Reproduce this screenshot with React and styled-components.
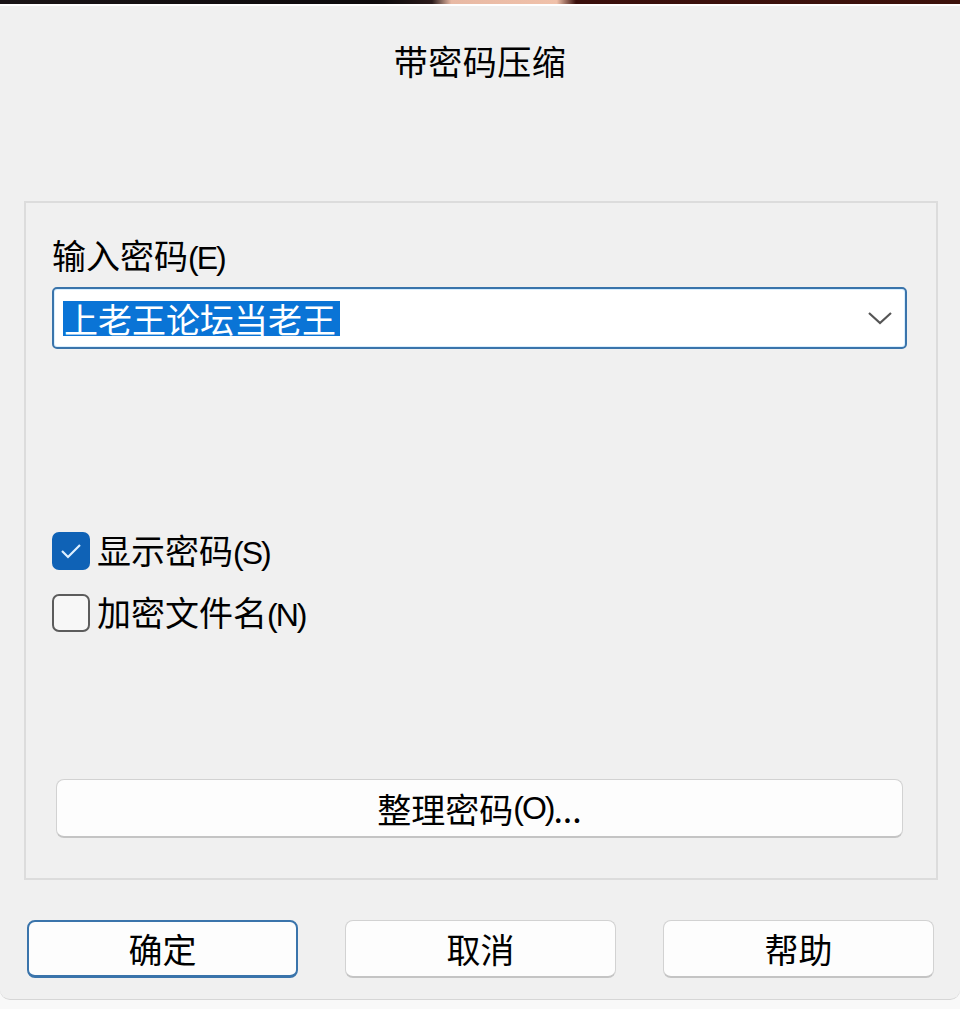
import React from "react";
import styled, { createGlobalStyle } from "styled-components";

const Global = createGlobalStyle`
  html, body { margin: 0; padding: 0; background: #f9f9f9; }
  body { font-family: "Noto Sans CJK SC", "Microsoft YaHei", "Noto Sans", sans-serif; color: #000; }
  * { box-sizing: border-box; }
`;

const Backdrop = styled.div`
  height: 4px;
  background: linear-gradient(90deg, #1a1416 0%, #0d0a0c 40%, #2a1a1a 45%, #e8b9a4 47%, #f0c1aa 58%, #3a0f0b 60%, #3d120c 100%);
`;

const Window = styled.div`
  height: 996px;
  background: #f0f0f0;
  border-top: 2px solid #ffffff;
  border-bottom: 1px solid #d6d6d6;
  border-radius: 0 0 10px 10px;
  display: flex;
  flex-direction: column;
`;

const Title = styled.div`
  padding-top: 35px;
  font-size: 34px;
  line-height: 40px;
  text-align: center;
  letter-spacing: 0.5px;
`;

const Group = styled.div`
  margin: 120px 22px 0 24px;
  height: 679px;
  border: 2px solid #dcdcdc;
  padding: 32px 29px 0 26px;
  display: flex;
  flex-direction: column;
  & > * { flex: none; }
`;

const Label = styled.div`
  font-size: 34px;
  line-height: 40px;
  margin-bottom: 9px;
`;

const Combo = styled.div`
  height: 62px;
  border: 2px solid #3a74ab;
  border-radius: 5px;
  background: #ffffff;
  box-shadow: inset 0 0 0 1px #d9efff;
  display: flex;
  align-items: center;
  padding: 0 12px 0 9px;
`;

const Selection = styled.span`
  background: #0a74d6;
  color: #ffffff;
  font-size: 34px;
  line-height: 35px;
  padding: 0 4px 0 1px;
`;

const Spacer = styled.div`
  flex: 1;
`;

const Checks = styled.div`
  margin-top: 183px;
  display: flex;
  flex-direction: column;
  gap: 24px;
`;

const CheckRow = styled.div`
  display: flex;
  align-items: center;
  gap: 7px;
  height: 38px;
  font-size: 34px;
  line-height: 40px;
`;

const Box = styled.div`
  width: 38px;
  height: 38px;
  border-radius: 7px;
  flex: none;
  display: flex;
  align-items: center;
  justify-content: center;
  background: ${(p) => (p.$checked ? "#0f62b6" : "#f7f7f7")};
  border: ${(p) => (p.$checked ? "none" : "2px solid #5c5c5c")};
`;

const Mnemonic = styled.span`
  font-family: "Liberation Sans Narrow", "Liberation Sans", Arial, sans-serif;
  letter-spacing: -2px;
  font-size: 32px;
`;

const WideButton = styled.div`
  margin: 147px 4px 0 4px;
  height: 59px;
  background: #fdfdfd;
  border: 1px solid #d2d2d2;
  border-bottom: 2px solid #c4c4c4;
  border-radius: 8px;
  display: flex;
  align-items: center;
  justify-content: center;
  font-size: 34px;
`;

const Footer = styled.div`
  margin: 40px 0 0 27px;
  display: flex;
  gap: 47px;
`;

const Button = styled.div`
  width: 271px;
  height: 58px;
  background: #fdfdfd;
  border: ${(p) => (p.$default ? "2px solid #3a74ab" : "1px solid #d2d2d2")};
  border-bottom: ${(p) => (p.$default ? "3px solid #3a74ab" : "2px solid #c4c4c4")};
  border-radius: 8px;
  display: flex;
  align-items: center;
  justify-content: center;
  font-size: 34px;
`;

export default function App() {
  return (
    <>
      <Global />
      <Backdrop />
      <Window>
        <Title>带密码压缩</Title>
        <Group>
          <Label>
            输入密码<Mnemonic>(E)</Mnemonic>
          </Label>
          <Combo>
            <Selection>上老王论坛当老王</Selection>
            <Spacer />
            <svg width="26" height="16" viewBox="0 0 26 16">
              <polyline points="2,3 13,13 24,3" fill="none" stroke="#555" strokeWidth="2.2" />
            </svg>
          </Combo>
          <Checks>
            <CheckRow>
              <Box $checked>
                <svg width="26" height="22" viewBox="0 0 26 22">
                  <polyline points="4,11 10,17 22,5" fill="none" stroke="#dff0ff" strokeWidth="2.2" />
                </svg>
              </Box>
              <span>
                显示密码<Mnemonic>(S)</Mnemonic>
              </span>
            </CheckRow>
            <CheckRow>
              <Box />
              <span>
                加密文件名<Mnemonic>(N)</Mnemonic>
              </span>
            </CheckRow>
          </Checks>
          <WideButton>
            整理密码<Mnemonic>(O)</Mnemonic>...
          </WideButton>
        </Group>
        <Footer>
          <Button $default>确定</Button>
          <Button>取消</Button>
          <Button>帮助</Button>
        </Footer>
      </Window>
    </>
  );
}
